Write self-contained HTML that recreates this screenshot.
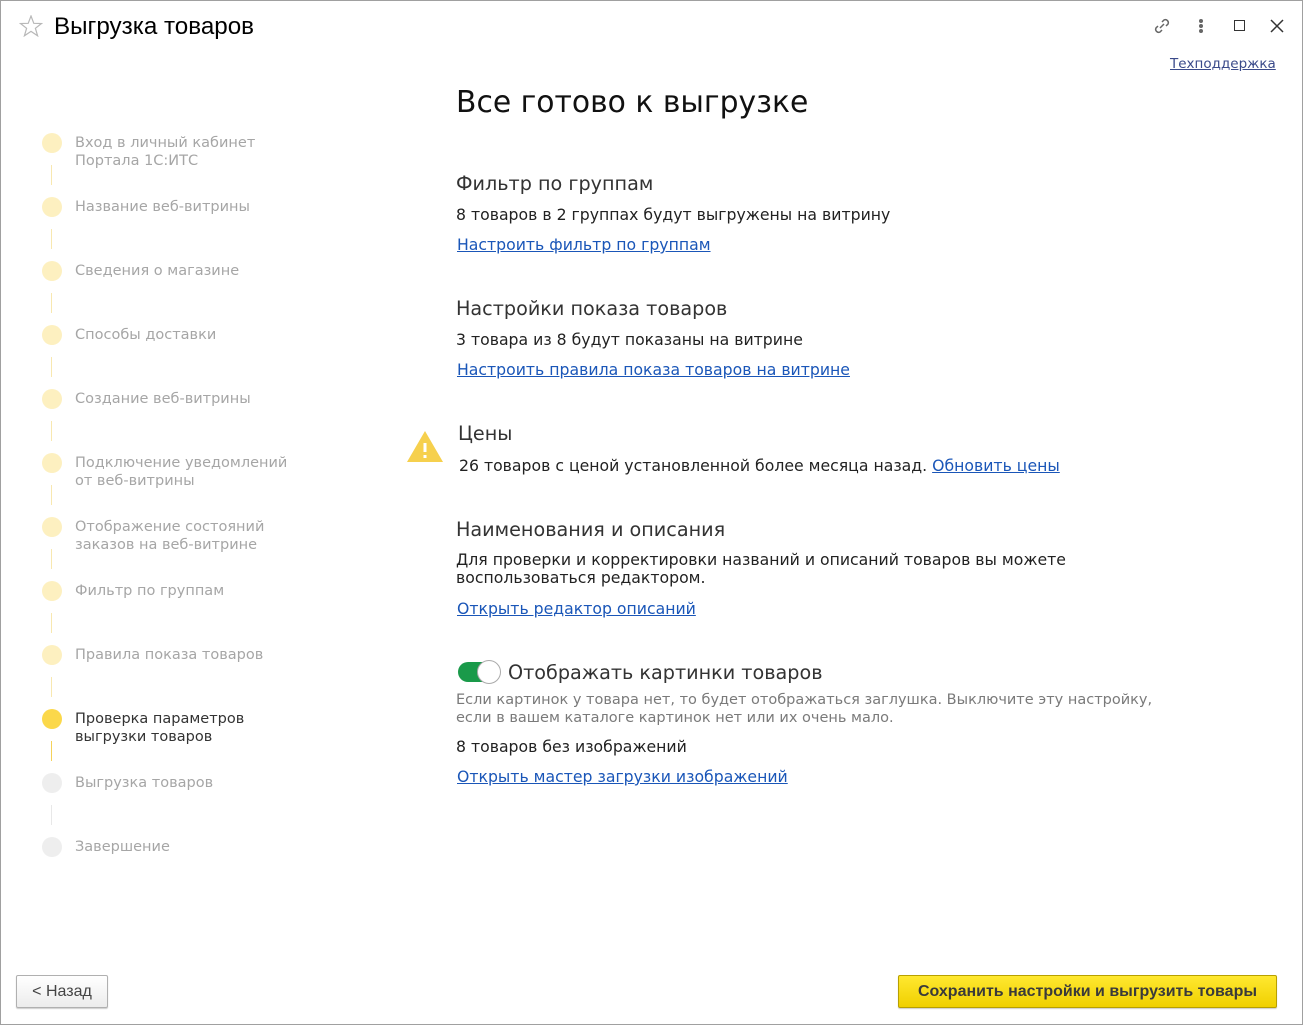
<!DOCTYPE html>
<html><head><meta charset="utf-8"><style>
*{margin:0;padding:0;box-sizing:border-box}
body{width:1303px;height:1025px;background:#fff;position:relative;overflow:hidden;font-family:"DejaVu Sans","Liberation Sans",sans-serif;color:#333}
.frame{position:absolute;left:0;top:0;width:1303px;height:1025px;border:1px solid #a0a0a0}
.abs{position:absolute;white-space:nowrap}
.title{left:54px;top:13px;font:24.2px "Liberation Sans",sans-serif;color:#000}
.dot{position:absolute;left:42px;width:20px;height:20px;border-radius:50%;background:#fdf0c0}
.ln{position:absolute;left:51px;width:1px;height:20px;background:#f8e8b0}
.st{position:absolute;left:75px;font-size:14.5px;line-height:18px;color:#a6a6a6}
a{color:#1a56b8;text-decoration:underline}
.h{font-size:19.2px;color:#333}
.t{font-size:15.7px;color:#222}
.lk{font-size:15.7px}
</style></head><body>
<div class="frame"></div>
<svg class="abs" style="left:19px;top:15px" width="24" height="22" viewBox="0 0 24 22"><polygon points="12,1 14.8,8.3 22.5,8.5 16.4,13.3 18.6,20.8 12,16.4 5.4,20.8 7.6,13.3 1.5,8.5 9.2,8.3" fill="none" stroke="#b8b8b8" stroke-width="1.2"/></svg>
<div class="abs title">Выгрузка товаров</div>
<svg class="abs" style="left:1152px;top:16px" width="20" height="20" viewBox="0 0 20 20" fill="none" stroke="#666" stroke-width="1.5"><path d="M8 12l4-4"/><path d="M10 6l2-2a3 3 0 0 1 4 4l-2 2"/><path d="M10 14l-2 2a3 3 0 0 1-4-4l2-2"/></svg>
<div class="abs" style="left:1199px;top:19px;width:4px;height:4px;border-radius:50%;background:#666"></div>
<div class="abs" style="left:1199px;top:24px;width:4px;height:4px;border-radius:50%;background:#666"></div>
<div class="abs" style="left:1199px;top:29px;width:4px;height:4px;border-radius:50%;background:#666"></div>
<div class="abs" style="left:1234px;top:20px;width:11px;height:11px;border:1.5px solid #333"></div>
<svg class="abs" style="left:1270px;top:19px" width="14" height="14" viewBox="0 0 14 14" stroke="#333" stroke-width="1.5"><path d="M1 1l12 12M13 1L1 13"/></svg>
<a class="abs" style="left:1170px;top:56px;font-size:13.5px;color:#3a4a8a">Техподдержка</a>

<div class="dot" style="top:133px"></div><div class="ln" style="top:165px"></div>
<div class="st" style="top:134px">Вход в личный кабинет<br>Портала 1С:ИТС</div>
<div class="dot" style="top:197px"></div><div class="ln" style="top:229px"></div>
<div class="st" style="top:198px">Название веб-витрины</div>
<div class="dot" style="top:261px"></div><div class="ln" style="top:293px"></div>
<div class="st" style="top:262px">Сведения о магазине</div>
<div class="dot" style="top:325px"></div><div class="ln" style="top:357px"></div>
<div class="st" style="top:326px">Способы доставки</div>
<div class="dot" style="top:389px"></div><div class="ln" style="top:421px"></div>
<div class="st" style="top:390px">Создание веб-витрины</div>
<div class="dot" style="top:453px"></div><div class="ln" style="top:485px"></div>
<div class="st" style="top:454px">Подключение уведомлений<br>от веб-витрины</div>
<div class="dot" style="top:517px"></div><div class="ln" style="top:549px"></div>
<div class="st" style="top:518px">Отображение состояний<br>заказов на веб-витрине</div>
<div class="dot" style="top:581px"></div><div class="ln" style="top:613px"></div>
<div class="st" style="top:582px">Фильтр по группам</div>
<div class="dot" style="top:645px"></div><div class="ln" style="top:677px"></div>
<div class="st" style="top:646px">Правила показа товаров</div>
<div class="dot" style="top:709px;background:#fbd84a"></div><div class="ln" style="top:741px;background:#f5d25a"></div>
<div class="st" style="top:710px;color:#333">Проверка параметров<br>выгрузки товаров</div>
<div class="dot" style="top:773px;background:#eee"></div><div class="ln" style="top:805px;background:#e8e8e8"></div>
<div class="st" style="top:774px">Выгрузка товаров</div>
<div class="dot" style="top:837px;background:#eee"></div>
<div class="st" style="top:838px">Завершение</div>

<div class="abs" style="left:456px;top:85px;font-size:29.8px;color:#111">Все готово к выгрузке</div>
<div class="abs h" style="left:456px;top:172px">Фильтр по группам</div>
<div class="abs t" style="left:456px;top:205px">8 товаров в 2 группах будут выгружены на витрину</div>
<a class="abs lk" style="left:457px;top:235px">Настроить фильтр по группам</a>
<div class="abs h" style="left:456px;top:297px">Настройки показа товаров</div>
<div class="abs t" style="left:456px;top:330px">3 товара из 8 будут показаны на витрине</div>
<a class="abs lk" style="left:457px;top:360px">Настроить правила показа товаров на витрине</a>
<svg class="abs" style="left:406px;top:429px" width="38" height="34" viewBox="0 0 38 34"><polygon points="19,2 37,33 1,33" fill="#f6d04d"/><rect x="17.5" y="14" width="3" height="9" fill="#fff"/><rect x="17.5" y="26" width="3" height="3" fill="#fff"/></svg>
<div class="abs h" style="left:458px;top:422px">Цены</div>
<div class="abs t" style="left:459px;top:456px">26 товаров с ценой установленной более месяца назад. <a>Обновить цены</a></div>
<div class="abs h" style="left:456px;top:518px">Наименования и описания</div>
<div class="abs t" style="left:456px;top:551px;line-height:18px">Для проверки и корректировки названий и описаний товаров вы можете<br>воспользоваться редактором.</div>
<a class="abs lk" style="left:457px;top:599px">Открыть редактор описаний</a>
<div class="abs" style="left:458px;top:662px;width:42px;height:20px;border-radius:10px;background:#1a9a4a"></div>
<div class="abs" style="left:477px;top:660px;width:24px;height:24px;border-radius:50%;background:#fff;border:1px solid #aaa"></div>
<div class="abs h" style="left:508px;top:661px">Отображать картинки товаров</div>
<div class="abs" style="left:456px;top:691px;font-size:14.5px;line-height:18px;color:#7a7a7a">Если картинок у товара нет, то будет отображаться заглушка. Выключите эту настройку,<br>если в вашем каталоге картинок нет или их очень мало.</div>
<div class="abs t" style="left:456px;top:737px">8 товаров без изображений</div>
<a class="abs lk" style="left:457px;top:767px">Открыть мастер загрузки изображений</a>

<div class="abs" style="left:16px;top:975px;width:92px;height:33px;border:1px solid #b0b0b0;border-radius:2px;background:linear-gradient(#fff,#ececec);box-shadow:0 1px 1px #ccc;font:16px 'Liberation Sans',sans-serif;color:#444;text-align:center;line-height:31px">&lt; Назад</div>
<div class="abs" style="left:898px;top:975px;width:379px;height:33px;border:1px solid #b8a000;border-radius:2px;background:linear-gradient(#ffe830,#f0d000);box-shadow:0 1px 1px #ccc;font:bold 16px 'Liberation Sans',sans-serif;color:#3a3a3a;text-align:center;line-height:31px">Сохранить настройки и выгрузить товары</div>
</body></html>
